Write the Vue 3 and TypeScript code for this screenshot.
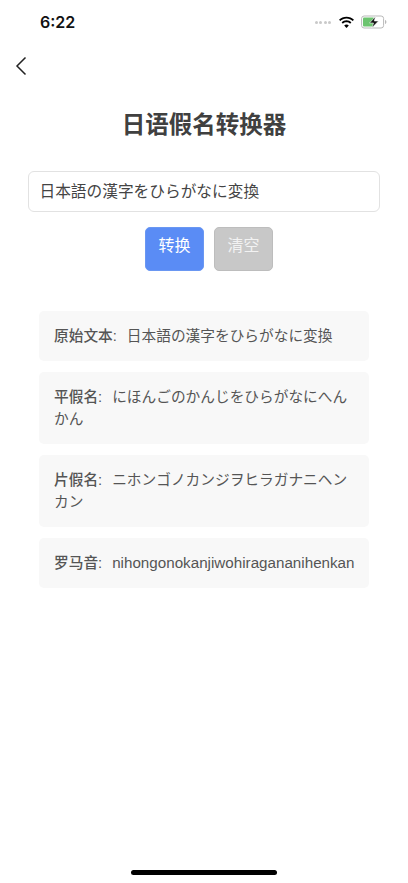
<script setup lang="ts">
interface Row { label: string; value: string; latin?: boolean }
const source = '日本語の漢字をひらがなに変換'
const rows: Row[] = [
  { label: '原始文本:', value: source },
  { label: '平假名:', value: 'にほんごのかんじをひらがなにへんかん' },
  { label: '片假名:', value: 'ニホンゴノカンジヲヒラガナニヘンカン' },
  { label: '罗马音:', value: 'nihongonokanjiwohiraganani' + 'henkan', latin: true },
]
</script>

<template>
  <div class="page">
    <header class="status">
      <span class="time">6:22</span>
      <div class="status-icons">
        <span class="signal"><i></i><i></i><i></i><i></i></span>
        <svg class="wifi" width="17" height="13" viewBox="0 0 17 13">
          <path d="M8.500 2.600c2.400 0 4.600.9 6.200 2.500l1.300-1.400C14 1.800 11.400.7 8.500.7S3 1.800 1 3.700l1.300 1.400c1.600-1.600 3.800-2.500 6.200-2.500z" fill="#000" />
          <path d="M8.500 6.300c1.400 0 2.600.5 3.600 1.400l1.300-1.400C12.100 5 10.400 4.300 8.500 4.300S4.900 5 3.600 6.300l1.300 1.400c1-.9 2.200-1.400 3.600-1.400z" fill="#000" />
          <path d="M8.500 12l2.300-2.500c-.6-.6-1.400-.9-2.300-.9s-1.700.3-2.300.9z" fill="#000" />
        </svg>
        <svg class="battery" width="26" height="14" viewBox="0 0 26 14">
          <rect x="0.600" y="1" width="22" height="12" rx="2.500" fill="#fff" stroke="#b9b9b9" stroke-width="1" />
          <rect x="2" y="2.400" width="11" height="9.200" rx="1" fill="#6cc46f" />
          <path d="M24 5v4c.9-.3 1.400-1.100 1.400-2s-.5-1.700-1.400-2z" fill="#b9b9b9" />
          <path d="M14.500 1.500L8.500 8h4l-1.500 4.800L17.500 6h-4.200z" fill="#111" stroke="#fff" stroke-width="0.600" />
        </svg>
      </div>
    </header>

    <nav class="nav">
      <svg width="12" height="20" viewBox="0 0 12 20" fill="none">
        <path d="M10.500 1.500L2 10l8.500 8.500" stroke="#222" stroke-width="1.500" />
      </svg>
    </nav>

    <h1 class="title">日语假名转换器</h1>

    <div class="field">{{ source }}</div>

    <div class="actions">
      <button class="btn primary" type="button">转换</button>
      <button class="btn muted" type="button">清空</button>
    </div>

    <section class="results">
      <div v-for="row in rows" :key="row.label" class="card">
        <span class="label">{{ row.label }}</span>
        <span class="value" :class="{ latin: row.latin }">{{ row.value }}</span>
      </div>
    </section>

    <div class="home-bar"></div>
  </div>
</template>

<style>
html, body { margin: 0; background: #fff; }
</style>

<style scoped>
.page {
  position: relative;
  width: 408px;
  height: 883px;
  overflow: hidden;
  background: #fff;
  font-family: "Liberation Sans", "Noto Sans CJK SC", "Noto Sans CJK JP", sans-serif;
  color: #333;
}
.status {
  height: 44px;
  padding: 0 21px 0 40px;
  display: flex;
  align-items: center;
  justify-content: space-between;
  box-sizing: border-box;
}
.time {
  font-family: Inter, "Liberation Sans", sans-serif;
  font-size: 16px;
  font-weight: 600;
  color: #111;
}
.status-icons { display: flex; align-items: center; gap: 6px; }
.signal { display: flex; gap: 1.500px; margin-right: 1px; }
.signal i { width: 3px; height: 3px; border-radius: 50%; background: #c9c9c9; }
.nav { height: 44px; padding-left: 15px; display: flex; align-items: center; }
.title {
  margin: 15px 0 0;
  height: 44px;
  line-height: 44px;
  font-size: 23.500px;
  font-weight: 600;
  text-align: center;
  color: #404040;
}
.field {
  margin: 24px 28px 0;
  height: 41px;
  box-sizing: border-box;
  padding-left: 10.500px;
  border: 1px solid #e2e2e2;
  border-radius: 6px;
  font-size: 15.700px;
  line-height: 39px;
  color: #444;
}
.actions { margin-top: 15px; padding-left: 10px; display: flex; justify-content: center; gap: 10px; }
.btn {
  width: 59px;
  height: 44px;
  padding: 0 0 11px;
  border-radius: 5px;
  font-family: inherit;
  font-size: 16px;
  color: #fff;
}
.primary { background: #5a8cf5; border: 1px solid #6a97f2; }
.muted { background: #c8c8c8; border: 1px solid #bdbdbd; color: #f2f2f2; }
.results {
  margin: 40px 39px 0;
  display: flex;
  flex-direction: column;
  gap: 11px;
}
.card {
  background: #f8f8f8;
  border-radius: 5px;
  padding: 14px 14px 14px 15px;
  font-size: 14.700px;
  line-height: 22px;
  color: #555;
  word-break: break-all;
}
.label { font-weight: 500; margin-right: 10px; color: #555; }
.value { color: #555; }
.latin { font-size: 15.200px; }
.home-bar {
  position: absolute;
  left: 131px;
  bottom: 8px;
  width: 146px;
  height: 5px;
  border-radius: 3px;
  background: #000;
}
</style>
